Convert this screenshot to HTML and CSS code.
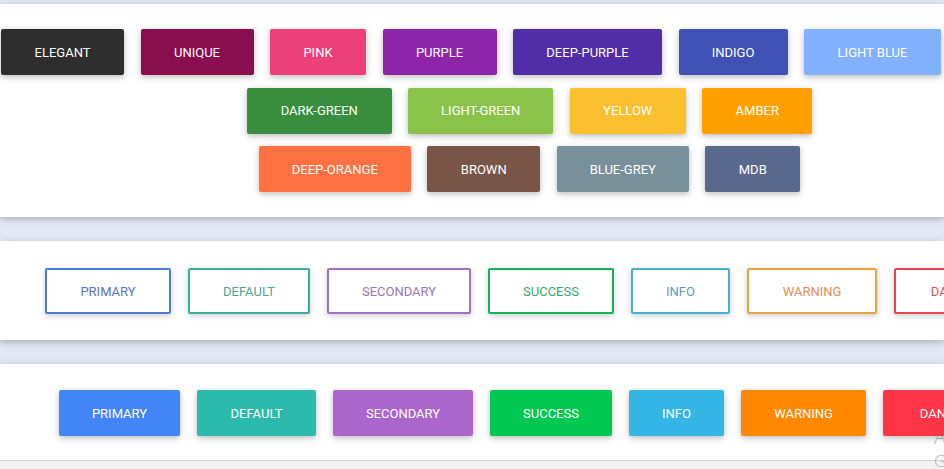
FILE: index.html
```html
<!DOCTYPE html>
<html lang="en">
<head>
<meta charset="utf-8">
<title>Buttons</title>
<link rel="stylesheet" href="styles.css">
</head>
<body>
<main class="page">
  <section class="card card-colors">
    <div class="row row-first">
      <button class="btn elegant">ELEGANT</button>
      <button class="btn unique">UNIQUE</button>
      <button class="btn pink">PINK</button>
      <button class="btn purple">PURPLE</button>
      <button class="btn deep-purple">DEEP-PURPLE</button>
      <button class="btn indigo">INDIGO</button>
      <button class="btn light-blue">LIGHT BLUE</button>
    </div>
    <div class="row row-centered">
      <button class="btn dark-green">DARK-GREEN</button>
      <button class="btn light-green">LIGHT-GREEN</button>
      <button class="btn yellow">YELLOW</button>
      <button class="btn amber">AMBER</button>
    </div>
    <div class="row row-centered">
      <button class="btn deep-orange">DEEP-ORANGE</button>
      <button class="btn brown">BROWN</button>
      <button class="btn blue-grey">BLUE-GREY</button>
      <button class="btn mdb">MDB</button>
    </div>
  </section>

  <section class="card card-outline">
    <div class="row row-outline">
      <button class="btn outline o-primary">PRIMARY</button>
      <button class="btn outline o-default">DEFAULT</button>
      <button class="btn outline o-secondary">SECONDARY</button>
      <button class="btn outline o-success">SUCCESS</button>
      <button class="btn outline o-info">INFO</button>
      <button class="btn outline o-warning">WARNING</button>
      <button class="btn outline o-danger">DANGER</button>
    </div>
  </section>

  <section class="card card-solid">
    <div class="row row-solid">
      <button class="btn s-primary">PRIMARY</button>
      <button class="btn s-default">DEFAULT</button>
      <button class="btn s-secondary">SECONDARY</button>
      <button class="btn s-success">SUCCESS</button>
      <button class="btn s-info">INFO</button>
      <button class="btn s-warning">WARNING</button>
      <button class="btn s-danger">DANGER</button>
    </div>
  </section>

  <footer class="footer"></footer>
</main>
<div class="watermark">
  <div class="wm-line">Activate Windows</div>
  <div class="wm-line wm-small">Go to Settings to activate Windows.</div>
</div>
</body>
</html>
```

FILE: styles.css
```css
html, body {
  margin: 0;
  padding: 0;
  overflow: hidden;
  height: 100%;
}

body {
  background: #e4e8f5;
  font-family: Roboto, "Liberation Sans", Arial, sans-serif;
}

.page {
  display: flex;
  flex-direction: column;
  padding-top: 4px;
}

.card {
  background: #ffffff;
  box-shadow: 0 2px 5px 0 rgba(0, 0, 0, 0.16), 0 2px 10px 0 rgba(0, 0, 0, 0.12);
  overflow: hidden;
}

.card-colors {
  height: 213px;
  box-sizing: border-box;
  padding: 25px 0 0;
  display: flex;
  flex-direction: column;
  gap: 12.5px;
}

.card-outline {
  margin-top: 24px;
  height: 99px;
  box-sizing: border-box;
  padding-top: 27px;
}

.card-solid {
  margin-top: 24px;
  height: 96px;
  box-sizing: border-box;
  padding-top: 26px;
}

.footer {
  height: 10px;
  border-top: 1px solid #d2d2d2;
  background: #f2f2f2;
}

.row {
  display: flex;
  gap: 16.5px;
}

.row-first {
  padding-left: 1px;
}

.row-centered {
  justify-content: center;
  padding-left: 115px;
}

.row-outline {
  padding-left: 45px;
  gap: 17px;
}

.row-solid {
  padding-left: 59px;
  gap: 17px;
}

.btn {
  flex: 0 0 auto;
  height: 46px;
  box-sizing: border-box;
  border: 0;
  border-radius: 2px;
  padding: 0;
  margin: 0;
  display: flex;
  align-items: center;
  justify-content: center;
  color: #ffffff;
  font-family: Roboto, "Liberation Sans", Arial, sans-serif;
  font-size: 13px;
  font-weight: 400;
  text-transform: uppercase;
  box-shadow: 0 2px 5px 0 rgba(0, 0, 0, 0.16), 0 2px 10px 0 rgba(0, 0, 0, 0.12);
  white-space: nowrap;
}

/* colour palette row */
.elegant { width: 123px; background: #2e2e2e; }
.unique { width: 113px; background: #880e4f; }
.pink { width: 96px; background: #ec407a; }
.purple { width: 114px; background: #8e24aa; }
.deep-purple { width: 149px; background: #512da8; }
.indigo { width: 109px; background: #3f51b5; }
.light-blue { width: 137px; background: #82b1ff; }
.dark-green { width: 145px; background: #388e3c; }
.light-green { width: 145px; background: #8bc34a; }
.yellow { width: 116px; background: #fbc02d; }
.amber { width: 110px; background: #ffa000; }
.deep-orange { width: 152px; background: #ff7043; }
.brown { width: 113px; background: #795548; }
.blue-grey { width: 132px; background: #78909c; }
.mdb { width: 95px; background: #59698d; }

/* outline buttons */
.outline {
  background: #ffffff;
  border: 2px solid;
  box-shadow: 0 2px 5px 0 rgba(0, 0, 0, 0.12), 0 2px 8px 0 rgba(0, 0, 0, 0.08);
}
.o-primary { width: 126px; border-color: #4d7cd6; color: #5b73bf; }
.o-default { width: 122px; border-color: #34b09f; color: #4aa595; }
.o-secondary { width: 144px; border-color: #a070c4; color: #9678b2; }
.o-success { width: 126px; border-color: #16b45a; color: #35a865; }
.o-info { width: 99px; border-color: #43b0d6; color: #5b9fc0; }
.o-warning { width: 130px; border-color: #eea03c; color: #e88b55; }
.o-danger { width: 124px; border-color: #e8434f; color: #e04f55; }

/* solid buttons */
.s-primary { width: 121px; background: #4285f4; }
.s-default { width: 119px; background: #2bbbad; }
.s-secondary { width: 140px; background: #aa66cc; }
.s-success { width: 122px; background: #00c851; }
.s-info { width: 95px; background: #33b5e5; }
.s-warning { width: 125px; background: #ff8800; }
.s-danger { width: 124px; background: #ff3547; }

.watermark {
  position: absolute;
  left: 934px;
  top: 426px;
  color: rgba(110, 110, 110, 0.55);
  font-family: "Open Sans", "Liberation Sans", sans-serif;
  font-size: 19px;
  font-weight: 300;
  line-height: 23px;
  white-space: nowrap;
}

.wm-small {
  font-size: 17px;
}
```
